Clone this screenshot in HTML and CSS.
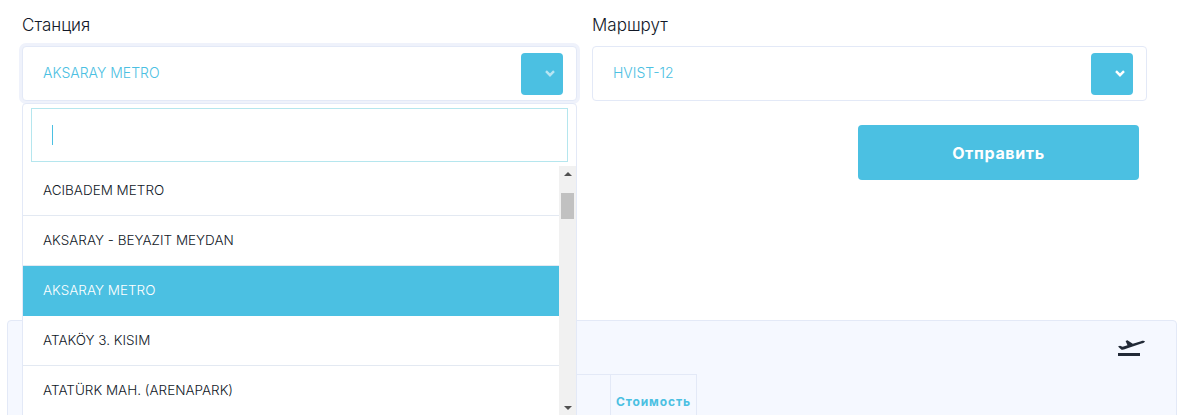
FILE: index.html
```html
<!DOCTYPE html>
<html lang="en">
<head>
    <meta charset="UTF-8">
    <meta name="viewport" content="width=device-width, initial-scale=1.0">
    <title>Трансфер</title>
    <link rel="stylesheet" href="styles.css">
</head>
<body>

    <div class="form-row">
        <div class="field">
            <label>Станция</label>
            <div class="select select-open">
                <span>AKSARAY METRO</span>
                <span class="select-btn">
                    <svg viewBox="0 0 10 7"><path d="M1 1.2 5 5.2 9 1.2"/></svg>
                </span>
            </div>
            <div class="dropdown">
                <div class="search"><span class="caret"></span></div>
                <div class="options">
                    <ul>
                        <li>ACIBADEM METRO</li>
                        <li>AKSARAY - BEYAZIT MEYDAN</li>
                        <li class="active">AKSARAY METRO</li>
                        <li>ATAKÖY 3. KISIM</li>
                        <li>ATATÜRK MAH. (ARENAPARK)</li>
                    </ul>
                    <div class="scrollbar">
                        <span class="arrow-up"></span>
                        <span class="thumb"></span>
                        <span class="arrow-down"></span>
                    </div>
                </div>
            </div>
        </div>

        <div class="field">
            <label>Маршрут</label>
            <div class="select">
                <span>HVIST-12</span>
                <span class="select-btn">
                    <svg viewBox="0 0 10 7"><path d="M1 1.2 5 5.2 9 1.2"/></svg>
                </span>
            </div>
            <div class="actions">
                <button type="button">Отправить</button>
            </div>
        </div>
    </div>

    <section class="panel">
        <svg class="plane" viewBox="0 0 27 17">
            <path d="M0 6.5 2 5.7 4.6 6.8 9.5 5.2 7.6 1 9.4.3 14.8 3.8 23 1.2C25 .6 26.6.9 27 1.4 26.8 2.2 25 3 23.5 3.5L8 8.8C6 9.6 4 10 3.5 9.8Z"/>
            <rect x="0" y="13" width="22" height="3"/>
        </svg>
        <table>
            <tr>
                <th class="col-wide"></th>
                <th class="col-price">Стоимость</th>
            </tr>
        </table>
    </section>

</body>
</html>
```

FILE: styles.css
```css
* {
    margin: 0;
    padding: 0;
    box-sizing: border-box;
}

html, body {
    height: 415px;
    overflow: hidden;
}

body {
    background: white;
    color: #111827;
    font-family: Inter, "Noto Sans", sans-serif;
    font-weight: 300;
}

.form-row {
    display: flex;
    gap: 15px;
    padding: 14px 0 0 22px;
}

.field {
    position: relative;
    width: 555px;
}

.field label {
    display: block;
    height: 32px;
    font-size: 17px;
    line-height: 23px;
}

.select {
    display: flex;
    align-items: center;
    justify-content: space-between;
    height: 55px;
    padding: 0 13px 0 20px;
    border: 1px solid #e3e9f7;
    border-radius: 4px;
    background: white;
    color: #4bc0e2;
    font-size: 14px;
}

.select > span:first-child {
    margin-bottom: 2px;
}

.select-open {
    box-shadow: 0 0 0 3px #eff2fb;
}

.select-btn {
    display: flex;
    align-items: center;
    justify-content: flex-end;
    width: 42px;
    height: 42px;
    padding-right: 8px;
    border-radius: 4px;
    background: #4bc0e2;
}

.select-btn svg {
    width: 10px;
    height: 7px;
    fill: none;
    stroke: white;
    stroke-width: 2.4;
}

.select-open .select-btn svg {
    opacity: 0.6;
}

.dropdown {
    position: absolute;
    top: 89px;
    left: 0;
    z-index: 2;
    width: 555px;
    height: 330px;
    border: 1px solid #e3e9f7;
    border-radius: 4px;
    background: white;
    font-size: 13.5px;
}

.search {
    display: flex;
    align-items: center;
    height: 54px;
    margin: 4px 8px 4px 8px;
    padding-left: 20px;
    border: 1px solid #b5e6ee;
}

.caret {
    width: 1px;
    height: 20px;
    background: #4bc0e2;
}

.options {
    display: flex;
}

.options ul {
    flex: 1;
    list-style: none;
}

.options li {
    display: flex;
    align-items: center;
    height: 50px;
    padding: 0 0 2px 20px;
    border-bottom: 1px solid #e3e9f2;
}

.options li.active {
    background: #4bc0e2;
    color: white;
    border-bottom-color: #4bc0e2;
}

.scrollbar {
    position: relative;
    display: flex;
    flex-direction: column;
    align-items: center;
    width: 17px;
    height: 250px;
    background: #f1f1f1;
}

.arrow-up, .arrow-down {
    width: 0;
    height: 0;
    border-left: 4px solid transparent;
    border-right: 4px solid transparent;
}

.arrow-up {
    margin-top: 6px;
    border-bottom: 4px solid #505050;
}

.arrow-down {
    margin-top: 187px;
    border-top: 4px solid #505050;
}

.thumb {
    width: 13px;
    height: 26px;
    margin-top: 17px;
    background: #c1c1c1;
}

.actions {
    display: flex;
    justify-content: flex-end;
    margin-top: 24px;
    padding-right: 8px;
}

button {
    width: 281px;
    height: 55px;
    border: none;
    border-radius: 4px;
    background: #4bc0e2;
    color: white;
    font-family: Inter, "Noto Sans", sans-serif;
    font-size: 16px;
    font-weight: 700;
    letter-spacing: 0.65px;
}

.panel {
    display: flow-root;
    height: 100px;
    margin: 140px 2px 0 7px;
    border: 1px solid #e3e9f7;
    border-radius: 4px;
    background: #f5f8ff;
}

.plane {
    display: block;
    width: 27px;
    height: 17px;
    margin: 19px 31px 0 auto;
    fill: #212936;
}

table {
    margin: 17px 0 0 14px;
    border-collapse: collapse;
}

th {
    height: 52px;
    padding-top: 2px;
    border: 1px solid #e3e9f7;
}

.col-wide {
    width: 588px;
}

.col-price {
    width: 86px;
    color: #4bc0e2;
    font-size: 12px;
    font-weight: 700;
    letter-spacing: 0.9px;
}
```
